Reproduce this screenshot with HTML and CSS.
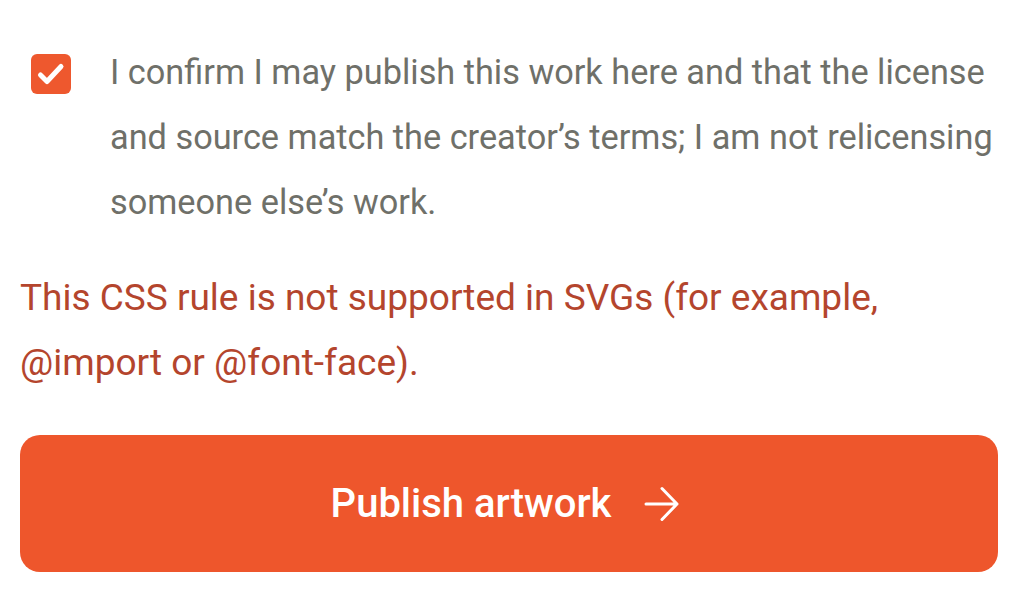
FILE: index.html
```html
<!DOCTYPE html>
<html lang="en">
<head>
<meta charset="utf-8">
<title>Publish artwork</title>
<link rel="stylesheet" href="styles.css">
</head>
<body>
<main class="panel">
  <label class="consent">
    <span class="checkbox" aria-hidden="true">
      <svg viewBox="0 0 40 40" width="40" height="40">
        <path d="M9.5 21 L16 27.5 L30 12.5" fill="none" stroke="#fff" stroke-width="5" stroke-linecap="round" stroke-linejoin="round"/>
      </svg>
    </span>
    <span class="consent-text">I confirm I may publish this work here and that the license and source match the creator’s terms; I am not relicensing someone else’s work.</span>
  </label>
  <p class="error">This CSS rule is not supported in SVGs (for example, @import or @font-face).</p>
  <button class="publish" type="button">
    <span class="publish-label">Publish artwork</span>
    <svg class="arrow" viewBox="0 0 36 36" width="36" height="36" aria-hidden="true">
      <path d="M2 18 H33 M18 2.5 L33 18 L18 33.5" fill="none" stroke="#fff" stroke-width="3" stroke-linecap="round" stroke-linejoin="round"/>
    </svg>
  </button>
</main>
</body>
</html>
```
FILE: styles.css
```css
html, body {
  margin: 0;
  padding: 0;
  background: #ffffff;
}

body {
  font-family: Roboto, "Liberation Sans", sans-serif;
}

.panel {
  padding: 40px 22px 0 20px;
  display: flex;
  flex-direction: column;
}

.consent {
  display: flex;
  align-items: flex-start;
  gap: 39px;
  padding-left: 11px;
}

.checkbox {
  flex: none;
  width: 40px;
  height: 40px;
  margin-top: 14px;
  border-radius: 6px;
  background: #ee582e;
  display: flex;
}

.consent-text {
  font-size: 34.3px;
  line-height: 65px;
  color: #6f7069;
}

.error {
  margin: 30px 0 0 0;
  font-size: 37px;
  line-height: 65px;
  color: #b4452d;
}

.publish {
  margin-top: 40px;
  height: 137px;
  border: none;
  border-radius: 20px;
  background: #ee562c;
  color: #ffffff;
  font-family: Roboto, "Liberation Sans", sans-serif;
  font-weight: 500;
  font-size: 40px;
  display: flex;
  align-items: center;
  justify-content: center;
  gap: 33px;
  padding: 0 7px 0 0;
}

.arrow {
  flex: none;
}
```
